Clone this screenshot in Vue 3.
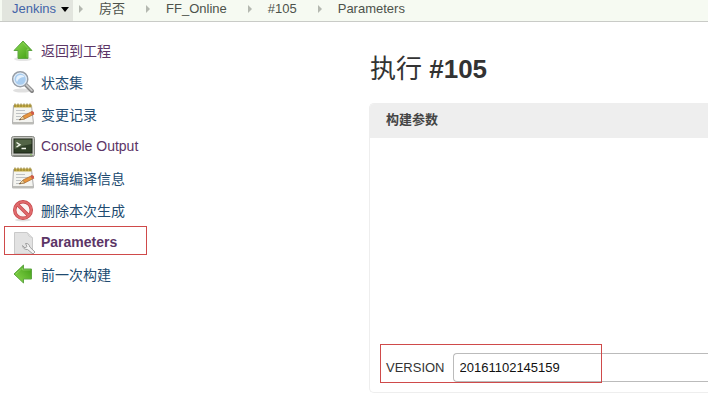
<template>
  <div class="page">
    <nav class="crumbs">
      <a href="#" class="home">Jenkins<span class="caret"></span></a>
      <template v-for="c in crumbs" :key="c">
        <span class="sep"></span>
        <a href="#" class="crumb">{{ c }}</a>
      </template>
    </nav>

    <div class="body">
      <aside class="side">
        <a
          v-for="t in tasks"
          :key="t.text"
          href="#"
          class="task"
          :class="{ visited: t.visited, active: t.active }"
        >
          <svg v-if="t.icon === 'up' || t.icon === 'prev'" class="icon" :class="t.icon" viewBox="0 0 24 24">
            <defs>
              <linearGradient :id="'g-' + t.icon" x1="0" y1="0" x2="1" y2="1">
                <stop offset="0" stop-color="#8fdc52" />
                <stop offset="1" stop-color="#3c9a12" />
              </linearGradient>
            </defs>
            <ellipse v-if="t.icon === 'up'" cx="12" cy="21" rx="9" ry="2" fill="#000" opacity=".1" />
            <path
              d="M12 3 L21 12.5 H17 V20.5 H7 V12.5 H3 Z"
              :fill="`url(#g-${t.icon})`"
              stroke="#5fa644"
              stroke-linejoin="round"
            />
            <path d="M12 5 L18 11.5 H16 V19.5" fill="none" stroke="#a6e27a" stroke-width=".8" opacity=".6" />
          </svg>

          <svg v-else-if="t.icon === 'search'" class="icon" viewBox="0 0 24 24">
            <ellipse cx="11" cy="20.5" rx="9" ry="2" fill="#000" opacity=".12" />
            <path d="M14.5 14.5 L21 21" stroke="#858585" stroke-width="4" stroke-linecap="round" />
            <path d="M15 14.5 L20.8 20.3" stroke="#c9c9c9" stroke-width="1.8" stroke-linecap="round" />
            <circle cx="9.2" cy="9.2" r="7.4" fill="#a9cdf0" stroke="#989ea6" stroke-width="1.8" />
            <circle cx="9.2" cy="9.2" r="6.2" fill="none" stroke="#e3edf7" stroke-width="1.2" />
            <path d="M5 10 Q5 5 10 5 Q13 5 13.5 7 Q8 7 6 12 Z" fill="#e6f2fd" />
          </svg>

          <svg v-else-if="t.icon === 'note'" class="icon" viewBox="0 0 24 24">
            <path d="M2.5 3.5 H20.5 L22.5 21.5 H1.5 Z" fill="#f4f4f0" stroke="#aaa" />
            <path d="M1.5 20 H22.5 V22.5 H1.5 Z" fill="#bcbcb8" />
            <path d="M3 2.5 H20.5 V5.5 H3 Z" fill="#c6ad45" />
            <path d="M4 1.5 V5 M7 1.5 V5 M10 1.5 V5 M13 1.5 V5 M16 1.5 V5 M19 1.5 V5" stroke="#8c7a32" stroke-width="1" />
            <path d="M5 8.5 H14 M5 11.5 H17 M5 14.5 H10 M5 17.5 H8" stroke="#bfc2c4" stroke-width="1" />
            <path d="M9.5 17.5 L12 14 L21 9.5 L22.8 12.3 L13.5 17 Z" fill="#e8953c" stroke="#a9632a" stroke-width=".7" />
            <path d="M12 14 L13.5 17 L8 18 Z" fill="#f0d3a0" stroke="#8d6f46" stroke-width=".6" />
            <path d="M19.5 10.2 L21 9.3 Q23.5 9.5 23 12 L21.2 13 Z" fill="#cf5b4a" />
            <path d="M9.5 16.8 L8 18 L10 17.6 Z" fill="#333" />
          </svg>

          <svg v-else-if="t.icon === 'console'" class="icon" viewBox="0 0 24 24">
            <rect x=".5" y="2.5" width="23" height="20" rx="2" fill="#c5c6c0" stroke="#858781" />
            <rect x="3" y="5" width="18" height="14" fill="#2f3f27" stroke="#1c2418" />
            <path d="M3.5 5.5 H20.5 V10 Q12 11 3.5 15 Z" fill="#677a58" opacity=".65" />
            <path d="M5.5 8.5 L9 10.8 L5.5 13 M10.5 14.5 H15" fill="none" stroke="#f1f6ea" stroke-width="1.4" />
            <path d="M2 21.5 H22" stroke="#8d8f89" />
            <circle cx="20" cy="20.7" r=".8" fill="#82c250" />
          </svg>

          <svg v-else-if="t.icon === 'stop'" class="icon" viewBox="0 0 24 24">
            <ellipse cx="12" cy="22" rx="8" ry="1.5" fill="#000" opacity=".12" />
            <circle cx="12" cy="12" r="8.3" fill="#fbf3f2" stroke="#c24548" stroke-width="3.4" />
            <path d="M6.2 6.2 L17.8 17.8" stroke="#c24548" stroke-width="3.4" />
            <circle cx="12" cy="12" r="8.3" fill="none" stroke="#e06a6c" stroke-width="2" />
            <path d="M6.2 6.2 L17.8 17.8" stroke="#e06a6c" stroke-width="2" />
          </svg>

          <svg v-else class="icon" viewBox="0 0 24 24">
            <path d="M3.5 2.5 H16 L21.5 8 V24 H3.5 Z" fill="#e2e2e2" stroke="#c9c9c9" />
            <path d="M16 2.5 Q17 7 21.5 8 Z" fill="#f8f8f8" stroke="#cfcfcf" />
            <path
              d="M11.5 15.5 L14 18 L16 16.5 L14.5 13.5 Q18 13 18.8 17 L24 22 L22 24 L16.5 19.5 Q12.5 20 11.5 15.5 Z"
              fill="#f3f3f3"
              stroke="#999"
              stroke-width=".9"
            />
          </svg>
          <span>{{ t.text }}</span>
        </a>
      </aside>

      <main class="main">
        <h1><span class="run">执行</span> #105</h1>
        <section class="panel">
          <h2>构建参数</h2>
          <div class="params">
            <div class="field">
              <label for="version">VERSION</label>
              <input id="version" v-model="version" type="text" />
            </div>
          </div>
        </section>
      </main>
    </div>
  </div>
</template>

<script setup>
import { ref } from 'vue'

const version = ref('20161102145159')

const crumbs = ['房否', 'FF_Online', '#105', 'Parameters']

const tasks = [
  { icon: 'up', text: '返回到工程', visited: true },
  { icon: 'search', text: '状态集' },
  { icon: 'note', text: '变更记录' },
  { icon: 'console', text: 'Console Output', visited: true },
  { icon: 'note', text: '编辑编译信息' },
  { icon: 'stop', text: '删除本次生成' },
  { icon: 'params', text: 'Parameters', visited: true, active: true },
  { icon: 'prev', text: '前一次构建' }
]
</script>

<style>
body { margin: 0; background: #fff; }
</style>

<style scoped>
.page { font-family: "Liberation Sans", "Noto Sans CJK SC", sans-serif; font-size: 13px; color: #333; overflow: hidden; }
a { text-decoration: none; }

.crumbs { display: flex; align-items: stretch; height: 21px; padding-left: 2px; background: #f6faf2; border-bottom: 1px solid #c9cbc7; line-height: 18px; }
.home { display: flex; gap: 5px; padding: 0 4px 0 10px; background: #e2e5de; color: #4464a8; }
.caret { align-self: center; margin-bottom: 3px; border: 4px solid transparent; border-top: 5px solid #000; border-bottom: 0; }
.crumb { color: #4d524b; }
.sep { align-self: center; margin: 0 16px 3px 21px; border: 4px solid transparent; border-left: 4px solid #b4b8b0; border-right: 0; }
.home + .sep { margin-left: 6px; }

.body { display: flex; }
.side { flex: 0 0 369px; padding-top: 12px; }
.task { position: relative; display: flex; align-items: center; gap: 6px; width: max-content; height: 32px; padding-left: 11px; font-size: 14px; color: #204a70; }
.task.visited { color: #5c3566; }
.task.active { font-weight: bold; }
.task.active::after { content: ""; position: absolute; left: 4px; top: 0; width: 141px; height: 27px; border: 1px solid #cf4a4a; }
.icon { width: 24px; height: 24px; }
.icon.prev { transform: rotate(-90deg); }

.main { flex: 1; min-width: 0; padding-top: 28px; }
h1 { margin: 0 0 15px; padding-left: 1px; font-size: 26px; line-height: 38px; color: #333; }
.run { font-weight: normal; }
.panel { border: 1px solid #eee; border-right: 0; border-radius: 5px 0 0 5px; }
h2 { margin: 0; padding: 0 16px 2px; font-size: 13px; line-height: 32px; color: #444; background: #eee; border-radius: 4px 0 0 0; }
.params { display: flex; align-items: flex-end; height: 244px; padding: 0 0 10px 16px; }
.field { position: relative; flex: 1; display: flex; align-items: center; gap: 8px; }
.field::after { content: ""; position: absolute; left: -6px; top: -9px; width: 220px; height: 37px; border: 1px solid #cf4a4a; pointer-events: none; }
input { flex: 1; min-width: 0; box-sizing: border-box; height: 29px; padding: 0 6px; border: 1px solid #bbb; border-right: 0; border-radius: 4px 0 0 4px; background: #fff; font: inherit; color: #111; }
</style>
